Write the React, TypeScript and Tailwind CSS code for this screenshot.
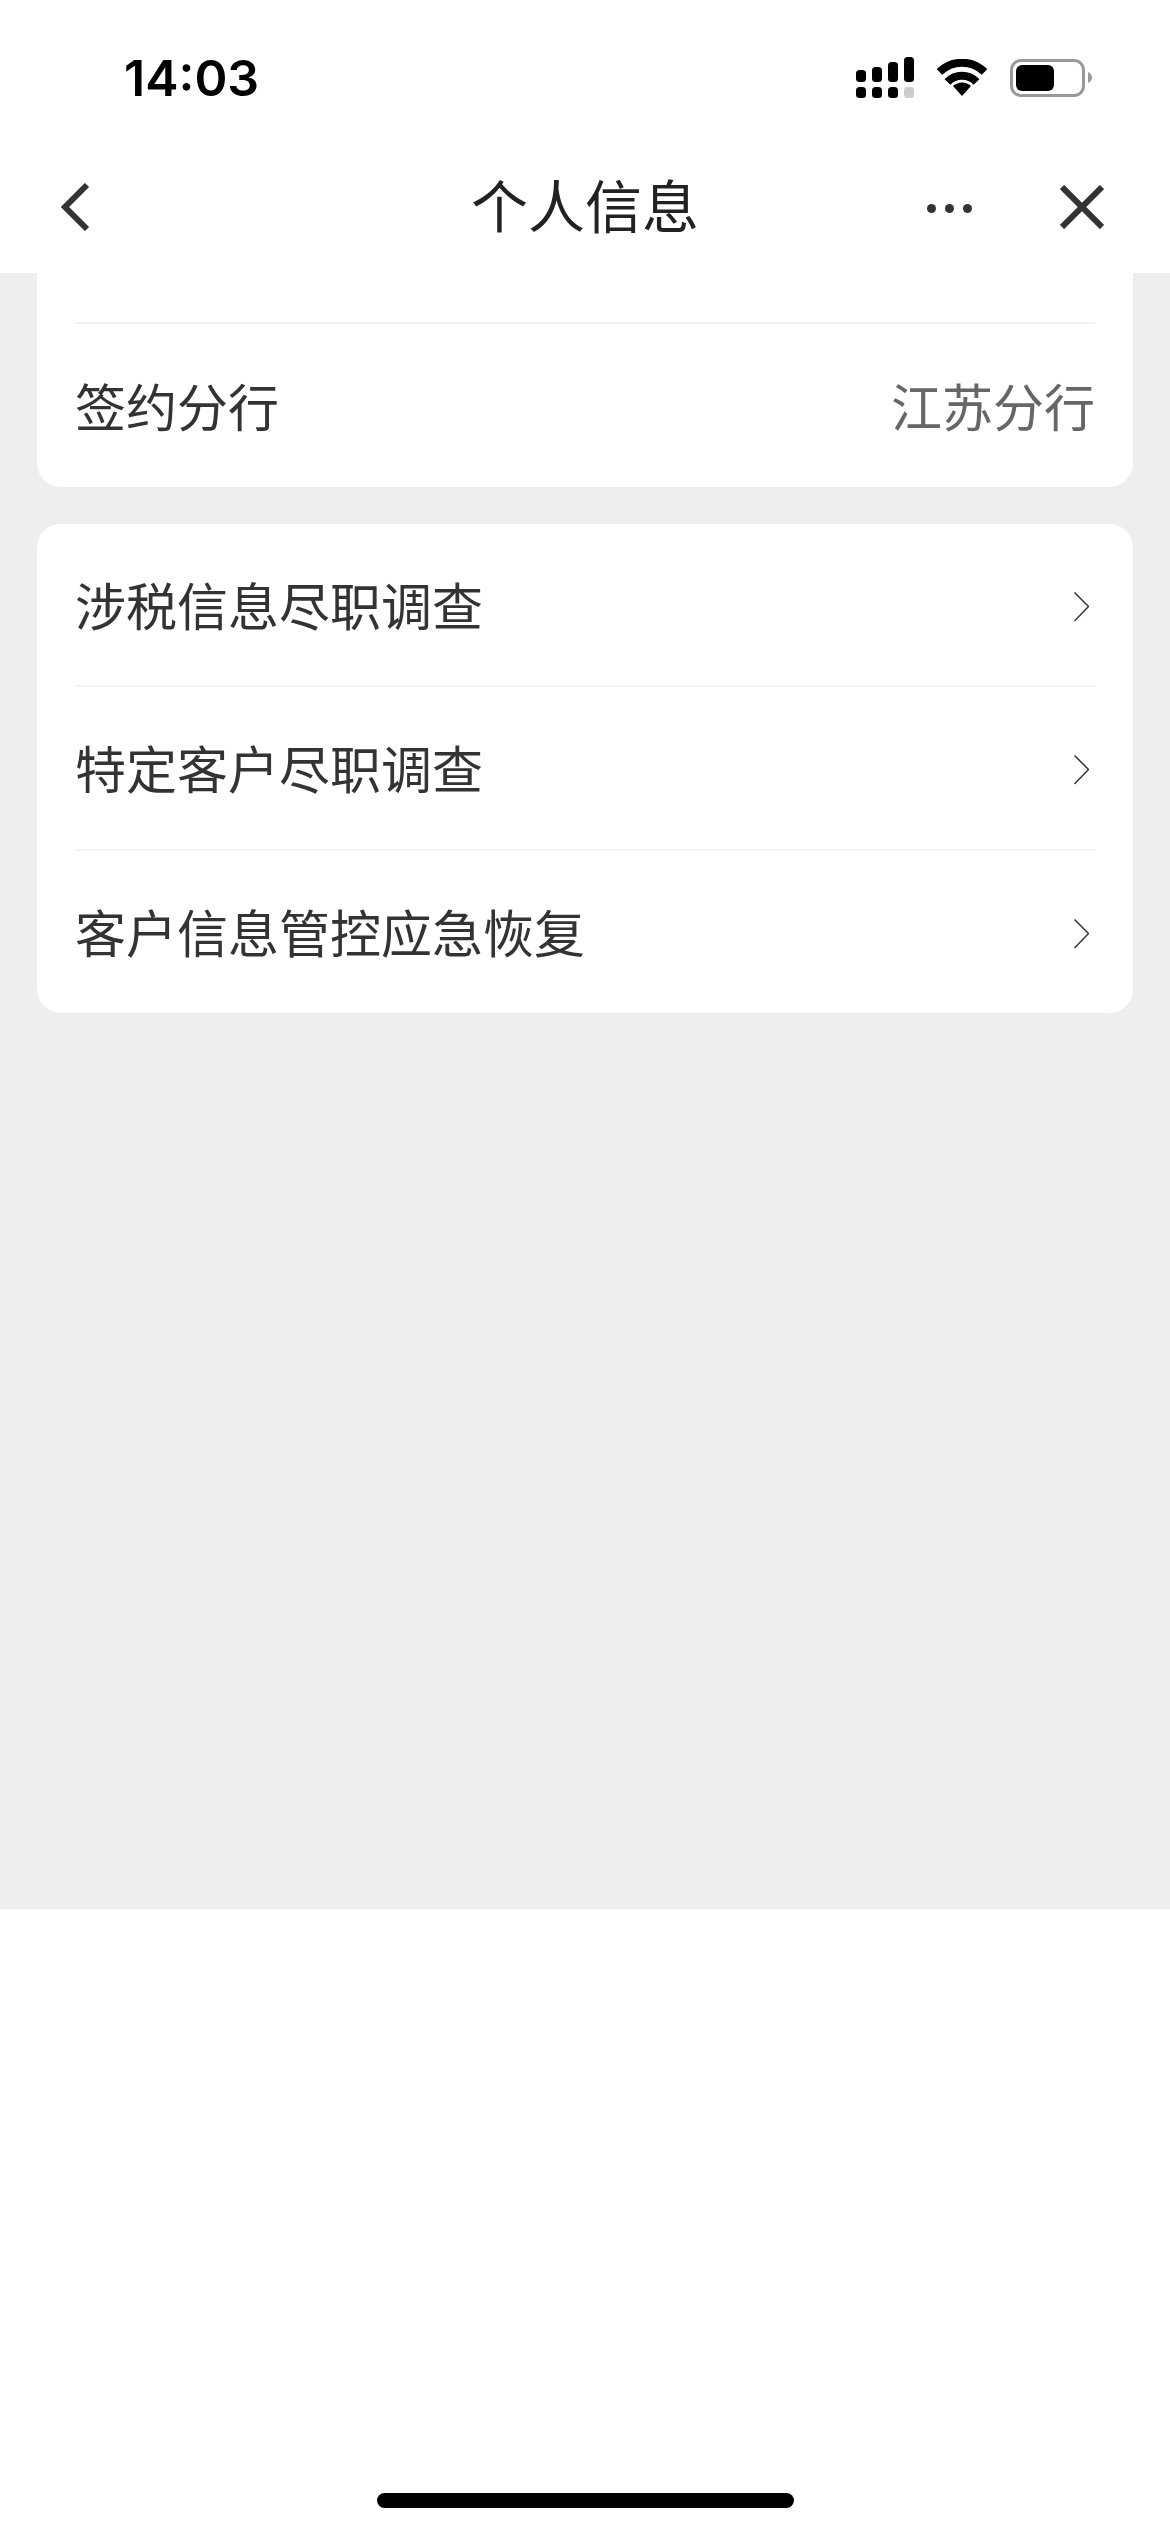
const cjk = "font-['Noto_Sans_CJK_SC','Noto_Sans',sans-serif]";

const SignalIcon = () => (
  <svg width="58" height="41" viewBox="0 0 58 41" fill="#000">
    <rect x="0" y="13" width="10" height="12" rx="3.5" />
    <rect x="16" y="10" width="10" height="15" rx="3.5" />
    <rect x="32" y="5" width="10" height="20" rx="3.5" />
    <rect x="48" y="0" width="10" height="25" rx="3.5" />
    <rect x="0" y="30" width="10" height="11" rx="3.5" />
    <rect x="16" y="30" width="10" height="11" rx="3.5" />
    <rect x="32" y="30" width="10" height="11" rx="3.5" />
    <rect x="48" y="30" width="10" height="11" rx="3.5" fill="#cccccc" />
  </svg>
);

const WifiIcon = () => (
  <svg width="50" height="37" viewBox="0 0 50 37" fill="none" stroke="#000" strokeWidth="8">
    <path d="M2.500 13 A32 32 0 0 1 47.500 13" />
    <path d="M10.500 23 A20 20 0 0 1 39.500 23" />
    <path d="M16 27 A13 13 0 0 1 34 27 L25 37 Z" fill="#000" stroke="none" />
  </svg>
);

const BatteryIcon = () => (
  <div className="flex items-center">
    <div className="w-[75px] h-[38px] rounded-[11px] border-[3px] border-[#999999] p-[3px]">
      <div className="w-[38px] h-full rounded-[6px] bg-black" />
    </div>
    <svg className="ml-[3px]" width="4" height="11" viewBox="0 0 4 11" fill="#999999">
      <path d="M0 0 C2.500 1 4 3 4 5.500 C4 8 2.500 10 0 11 Z" />
    </svg>
  </div>
);

const Chevron = () => (
  <svg className="mr-[6px] mt-[5px]" width="15" height="30" viewBox="0 0 15 30" fill="none" stroke="#333333" strokeWidth="1.5">
    <path d="M0.500 0.500 L14.500 14.500 L0.500 29" />
  </svg>
);

const LinkRow = ({ label, className }: { label: string; className: string }) => (
  <div className={`flex items-center justify-between ${className}`}>
    <span className="text-[51px] leading-none text-[#333333]">{label}</span>
    <Chevron />
  </div>
);

export default function App() {
  return (
    <div className={`h-[2532px] flex flex-col bg-white ${cjk}`}>
      {/* Status bar */}
      <header className="h-[273px] shrink-0 bg-white">
        <div className="h-[140px] flex items-start justify-between pl-[124px] pr-[78px] pt-[57px]">
          <span className="font-['Inter',sans-serif] text-[50px] leading-[43px] font-semibold text-black">14:03</span>
          <div className="flex items-center gap-[23px]">
            <SignalIcon />
            <WifiIcon />
            <BatteryIcon />
          </div>
        </div>

        {/* Nav */}
        <nav className="h-[133px] grid grid-cols-[1fr_auto_1fr] items-center pl-[60px] pr-[66px]">
          <svg width="30" height="48" viewBox="0 0 30 48" fill="none" stroke="#333333" strokeWidth="6">
            <path d="M27 2 L5 24 L27 46" />
          </svg>
          <h1 className="translate-x-[3px] -translate-y-[3px] text-[57px] leading-none font-normal text-[#222222]">个人信息</h1>
          <div className="flex items-center justify-end gap-[88px]">
            <div className="flex gap-[9px] mt-[3px]">
              <span className="w-[9px] h-[9px] rounded-full bg-[#333333]" />
              <span className="w-[9px] h-[9px] rounded-full bg-[#333333]" />
              <span className="w-[9px] h-[9px] rounded-full bg-[#333333]" />
            </div>
            <svg width="44" height="44" viewBox="0 0 44 44" fill="none" stroke="#333333" strokeWidth="6">
              <path d="M2 2 L42 42 M42 2 L2 42" />
            </svg>
          </div>
        </nav>
      </header>

      {/* Content */}
      <main className="h-[1636px] shrink-0 bg-[#eeeeee] px-[37px] flex flex-col gap-[37px]">
        <section className="bg-white rounded-b-[24px] px-[38px]">
          <div className="h-[51px] border-b-2 border-[#f3f3f3]" />
          <div className="h-[163px] flex items-center justify-between">
            <span className="text-[51px] leading-none text-[#333333]">签约分行</span>
            <span className="text-[51px] leading-none text-[#666666]">江苏分行</span>
          </div>
        </section>

        <section className="bg-white rounded-[24px] px-[38px]">
          <LinkRow label="涉税信息尽职调查" className="h-[163px] border-b-2 border-[#f3f3f3]" />
          <LinkRow label="特定客户尽职调查" className="h-[164px] pb-[1px] border-b-2 border-[#f3f3f3]" />
          <LinkRow label="客户信息管控应急恢复" className="h-[162px] pb-[2px]" />
        </section>
      </main>

      {/* Home indicator */}
      <footer className="flex-1 flex items-end justify-center pb-[24px]">
        <div className="w-[417px] h-[15px] rounded-full bg-black" />
      </footer>
    </div>
  );
}
